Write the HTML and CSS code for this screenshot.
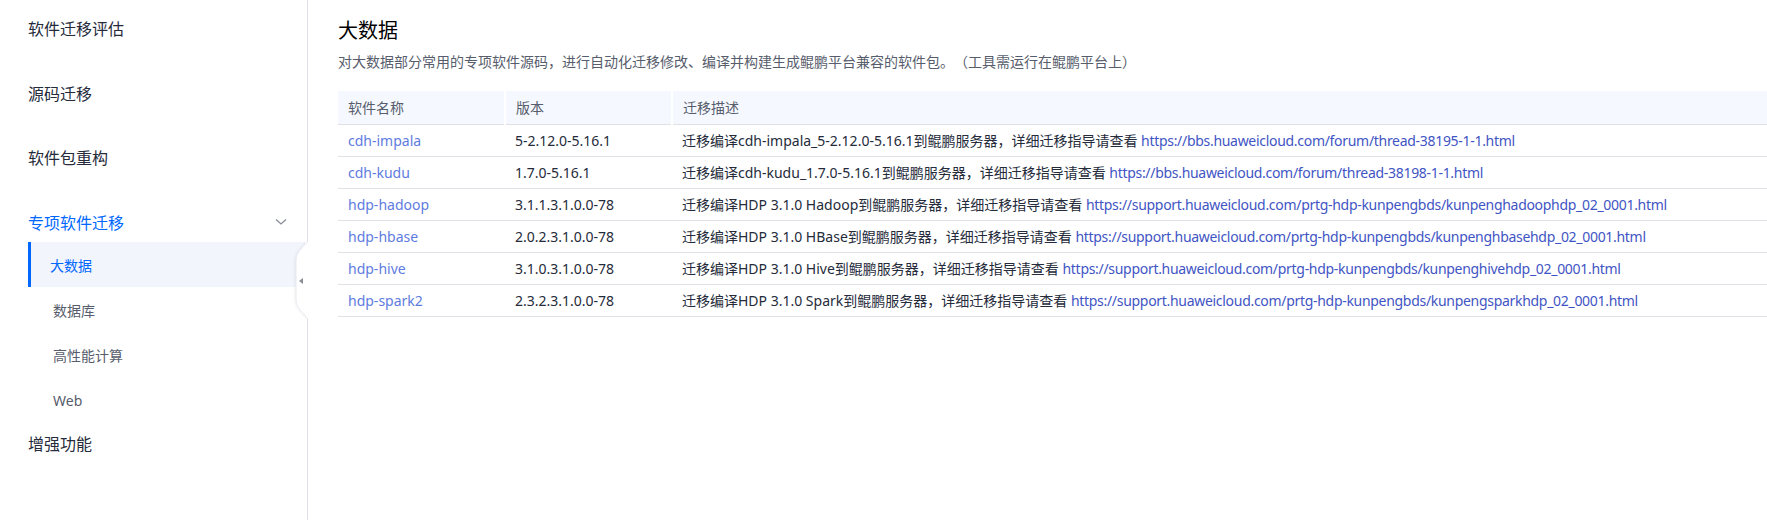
FILE: index.html
```html
<!DOCTYPE html>
<html lang="zh-CN">
<head>
<meta charset="utf-8">
<title>专项软件迁移 - 大数据</title>
<link rel="stylesheet" href="styles.css">
</head>
<body>
<div class="layout">
  <aside class="sidebar">
    <nav class="nav">
      <div class="nav-item">软件迁移评估</div>
      <div class="nav-item">源码迁移</div>
      <div class="nav-item">软件包重构</div>
      <div class="nav-item nav-group open">
        <span>专项软件迁移</span>
        <svg class="chevron" width="12" height="8" viewBox="0 0 12 8"><path d="M1 1.5 L6 6 L11 1.5" fill="none" stroke="#8a8e99" stroke-width="1.3"/></svg>
      </div>
      <div class="sub-list">
        <div class="sub-item active">大数据</div>
        <div class="sub-item">数据库</div>
        <div class="sub-item">高性能计算</div>
        <div class="sub-item">Web</div>
      </div>
      <div class="nav-item">增强功能</div>
    </nav>
    <div class="collapse-handle">
      <svg width="14" height="78" viewBox="0 0 14 78">
        <path d="M14 0 C10 6 2 10 2 20 L2 58 C2 68 10 72 14 78 Z" fill="#ffffff"/>
        <path d="M14 0 C10 6 2 10 2 20 L2 58 C2 68 10 72 14 78" fill="none" stroke="#e8eaf0" stroke-width="1"/>
        <path d="M5 40 L9 37 L9 43 Z" fill="#8a8e99"/>
      </svg>
    </div>
  </aside>
  <main class="main">
    <h1 class="title">大数据</h1>
    <p class="desc">对大数据部分常用的专项软件源码，进行自动化迁移修改、编译并构建生成鲲鹏平台兼容的软件包。（工具需运行在鲲鹏平台上）</p>
    <table class="table">
      <colgroup>
        <col class="c1"><col class="c2"><col class="c3">
      </colgroup>
      <thead>
        <tr><th>软件名称</th><th>版本</th><th>迁移描述</th></tr>
      </thead>
      <tbody>
        <tr><td><a class="name">cdh-impala</a></td><td>5-2.12.0-5.16.1</td><td>迁移编译cdh-impala_5-2.12.0-5.16.1到鲲鹏服务器，详细迁移指导请查看 <a class="url">https://bbs.huaweicloud.com/forum/thread-38195-1-1.html</a></td></tr>
        <tr><td><a class="name">cdh-kudu</a></td><td>1.7.0-5.16.1</td><td>迁移编译cdh-kudu_1.7.0-5.16.1到鲲鹏服务器，详细迁移指导请查看 <a class="url">https://bbs.huaweicloud.com/forum/thread-38198-1-1.html</a></td></tr>
        <tr><td><a class="name">hdp-hadoop</a></td><td>3.1.1.3.1.0.0-78</td><td>迁移编译HDP 3.1.0 Hadoop到鲲鹏服务器，详细迁移指导请查看 <a class="url">https://support.huaweicloud.com/prtg-hdp-kunpengbds/kunpenghadoophdp_02_0001.html</a></td></tr>
        <tr><td><a class="name">hdp-hbase</a></td><td>2.0.2.3.1.0.0-78</td><td>迁移编译HDP 3.1.0 HBase到鲲鹏服务器，详细迁移指导请查看 <a class="url">https://support.huaweicloud.com/prtg-hdp-kunpengbds/kunpenghbasehdp_02_0001.html</a></td></tr>
        <tr><td><a class="name">hdp-hive</a></td><td>3.1.0.3.1.0.0-78</td><td>迁移编译HDP 3.1.0 Hive到鲲鹏服务器，详细迁移指导请查看 <a class="url">https://support.huaweicloud.com/prtg-hdp-kunpengbds/kunpenghivehdp_02_0001.html</a></td></tr>
        <tr><td><a class="name">hdp-spark2</a></td><td>2.3.2.3.1.0.0-78</td><td>迁移编译HDP 3.1.0 Spark到鲲鹏服务器，详细迁移指导请查看 <a class="url">https://support.huaweicloud.com/prtg-hdp-kunpengbds/kunpengsparkhdp_02_0001.html</a></td></tr>
      </tbody>
    </table>
  </main>
</div>
</body>
</html>
```

FILE: styles.css
```css
* { box-sizing: border-box; }
html, body {
  margin: 0;
  padding: 0;
  background: #ffffff;
  font-family: "Noto Sans", "Noto Sans CJK SC", sans-serif;
  color: #252b3a;
  text-spacing-trim: space-all;
}
.layout {
  display: flex;
  height: 520px;
  overflow: hidden;
}
.sidebar {
  position: relative;
  flex: 0 0 308px;
  border-right: 1px solid #dfe1e6;
  height: 100%;
}
.nav {
  display: flex;
  flex-direction: column;
  padding-top: 8px;
}
.nav-item {
  height: 40px;
  display: flex;
  align-items: center;
  padding-left: 28px;
  font-size: 16px;
  color: #252b3a;
  margin-bottom: 24.67px;
}
.nav-group {
  justify-content: space-between;
  padding-right: 20px;
  margin-bottom: 0;
  color: #0067ff;
}
.nav-item:last-child { margin-bottom: 0; }
.sub-list {
  display: flex;
  flex-direction: column;
}
.sub-item {
  height: 45.3px;
  display: flex;
  align-items: center;
  margin-left: 28px;
  margin-right: 2px;
  padding-left: 22px;
  font-size: 14px;
  color: #575d6c;
  border-left: 3px solid transparent;
}
.sub-item.active {
  background: #f2f5fc;
  border-left-color: #0067ff;
  color: #0067ff;
  padding-left: 19px;
}
.collapse-handle {
  position: absolute;
  right: -1px;
  top: 241px;
  width: 14px;
  height: 78px;
  filter: drop-shadow(-1px 0 1px rgba(0,0,0,0.06));
}
.collapse-handle svg { display: block; }
.main {
  flex: 1;
  min-width: 0;
  padding: 17px 0 0 30px;
}
.title {
  margin: 0;
  font-size: 20px;
  font-weight: 400;
  line-height: 28px;
  color: #000000;
}
.desc {
  margin: 6px 0 0;
  font-family: "Noto Sans CJK SC", sans-serif;
  font-size: 14px;
  line-height: 20px;
  color: #575d6c;
}
.table {
  margin-top: 20px;
  width: 100%;
  border-collapse: collapse;
  table-layout: fixed;
  font-size: 14px;
}
.c1 { width: 167px; }
.c2 { width: 167px; }
.table th {
  height: 33px;
  text-align: left;
  font-weight: 400;
  color: #575d6c;
  background: #f5f8fe;
  padding: 0 10px;
  border-right: 2px solid #ffffff;
  border-bottom: 1px solid #dfe1e6;
}
.table th:last-child { border-right: none; }
.table td {
  height: 32px;
  padding: 0 10px;
  border-bottom: 1px solid #dfe1e6;
  white-space: nowrap;
  color: #252b3a;
}
.name { color: #5e7ce0; text-decoration: none; }
.url { color: #3f55c4; text-decoration: none; letter-spacing: -0.3px; }
```
